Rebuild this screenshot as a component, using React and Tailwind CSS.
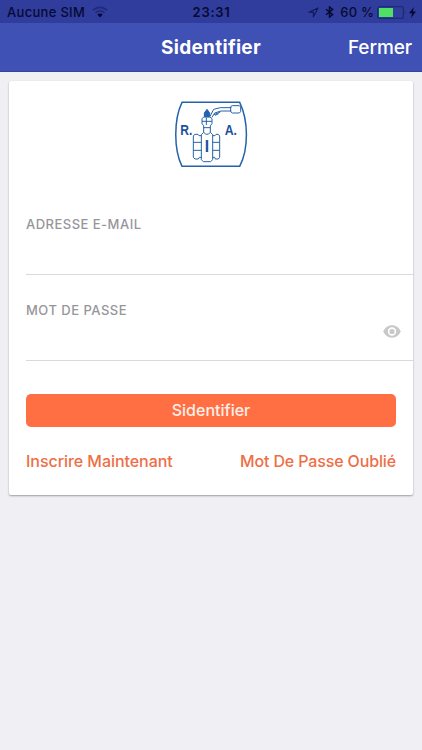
import React from "react";

function StatusBar() {
  return (
    <div className="flex h-[23px] items-center bg-[#303d9d] pl-[7px] pr-[6px] pt-[1px] text-[13px] leading-[22px] font-medium text-[#050a32]">
      <div className="flex flex-1 items-center">
        <span className="tracking-[0.3px]">Aucune SIM</span>
        <svg className="ml-[7px]" width="16" height="12" viewBox="0 0 16 12" fill="none">
          <path d="M1 4.200C5 .4 11 .4 15 4.200M3.500 6.700C6 4.300 10 4.300 12.500 6.700" stroke="#202b7c" strokeWidth="1.700" />
          <path d="M5.300 8.600C6.900 7.200 9.100 7.200 10.700 8.600L8 11.500Z" fill="#050a32" />
        </svg>
      </div>
      <span className="font-semibold tracking-[0.7px]">23:31</span>
      <div className="flex flex-1 items-center justify-end">
        <svg width="11" height="11" viewBox="0 0 11 11" fill="none" stroke="#111a58" strokeWidth="1.200" strokeLinejoin="round">
          <path d="M10 1 .9 5.200H5.400V9.800Z" />
        </svg>
        <svg className="ml-[6px]" width="9" height="12" viewBox="0 0 9 12" fill="none" stroke="#050a32" strokeWidth="1.400">
          <path d="M1 3.200 7.700 8.600 4.500 11.100V.9L7.700 3.400 1 8.800" />
        </svg>
        <span className="ml-[6px] tracking-[0.2px]">60 %</span>
        <svg className="ml-[3px]" width="29" height="13" viewBox="0 0 29 13">
          <rect x=".6" y=".6" width="25.800" height="11.800" rx="2" fill="none" stroke="#202b75" strokeWidth="1.200" />
          <rect x="2" y="2" width="14" height="9" fill="#4fe066" />
          <path d="M27.500 4.500Q29 6.500 27.500 8.500Z" fill="#202b75" />
        </svg>
        <svg className="ml-[3px]" width="7" height="11" viewBox="0 0 7 11" fill="#050a32">
          <path d="M4.800 0 0 6.200H3L2 11 7 4.600H4Z" />
        </svg>
      </div>
    </div>
  );
}

function NavBar() {
  return (
    <header className="grid h-[49px] grid-cols-[1fr_auto_1fr] items-center border-b border-[#35439c] bg-[#3f51b5] px-[10px] pt-[2px] text-white">
      <span />
      <h1 className="text-[19px] font-bold tracking-[0.3px]">Sidentifier</h1>
      <button className="justify-self-end text-[19px] font-medium tracking-[-0.1px]">Fermer</button>
    </header>
  );
}

function Logo() {
  return (
    <svg className="mt-[14px] ml-[161px] block" width="82" height="78" viewBox="0 0 246 234" fill="none" stroke="#2463a8" strokeWidth="3">
      <path d="M36 22H209C235 75 237 161 209 214H36C11 163 11 74 36 22Z" strokeWidth="4.500" />
      <g fill="#1d51a0" stroke="none" fontFamily="'Liberation Sans', Arial, sans-serif" fontWeight="700">
        <text x="31" y="121" fontSize="42" textLength="36" lengthAdjust="spacingAndGlyphs">R.</text>
        <text x="164" y="121" fontSize="42" textLength="37" lengthAdjust="spacingAndGlyphs">A.</text>
        <text x="104" y="171" fontSize="47">I</text>
      </g>
      <path d="M94 119 101 112Q111 124 121 112L128 119V194L122 200H100L94 194Z" />
      <path d="M94 122H87L84 118H74L70 123V187L75 192H85L88 187H94M128 122H135L138 118H145L149 123V187L145 192H136L134 187H128M70 142H94M70 166H94M128 142H149M128 166H149" />
      <path d="M101 112V92L96 86V71L101 66H120L126 71V86L121 92V112M96 79H126M109 68V90M101 98H121" />
      <path d="M103 65V54L111 43 119 54V65Z" fill="#2463a8" />
      <path d="M120 64 131 43 151 38H184M126 67 134 54 153 48H184M182 36Q183 32 187 32H208L212 36V50L208 54H187L182 50Z" />
      <path d="M132 59 151 51M135 61 146 56" strokeWidth="3" />
    </svg>
  );
}

function EyeIcon() {
  return (
    <svg width="18" height="13" viewBox="0 0 18 13">
      <path d="M9 .3C5 .3 1.700 2.800.3 6.500 1.700 10.200 5 12.700 9 12.700s7.300-2.500 8.700-6.200C16.300 2.800 13 .3 9 .3Z" fill="#c8c8c8" />
      <circle cx="9" cy="6.500" r="3.400" fill="#c8c8c8" stroke="#fff" strokeWidth="1.600" />
    </svg>
  );
}

export default function App() {
  return (
    <div className="min-h-[750px] w-full bg-[#efeff4] font-['Inter',sans-serif]">
      <StatusBar />
      <NavBar />
      <main className="mx-[9px] mt-[9px] h-[414px] overflow-hidden rounded-[2px] bg-white pl-[17px] shadow-[0_1px_2px_rgba(0,0,0,0.35)]">
        <div className="-ml-[17px]">
          <Logo />
        </div>
        <div className="mt-[41px] h-[61px] border-b border-[#d9d9dc]">
          <label className="block text-[13px] leading-5 font-medium tracking-[0.48px] text-[#96969a]">ADRESSE E-MAIL</label>
        </div>
        <div className="flex h-[86px] flex-col border-b border-[#d9d9dc] pt-[25px]">
          <label className="block text-[13px] leading-5 font-medium tracking-[0.48px] text-[#96969a]">MOT DE PASSE</label>
          <div className="mt-[5px] flex justify-end pr-[12px]">
            <EyeIcon />
          </div>
        </div>
        <div className="pr-[17px]">
          <button className="mt-[33px] block h-[33px] w-full rounded-[5px] bg-[#ff6f43] pb-[1px] text-[16px] font-medium text-[#fff0e9]">Sidentifier</button>
          <div className="mt-[22px] flex justify-between text-[16px] leading-6 font-medium text-[#ee6e45]">
            <a className="tracking-[-0.05px]">Inscrire Maintenant</a>
            <a className="tracking-[-0.14px]">Mot De Passe Oublié</a>
          </div>
        </div>
      </main>
    </div>
  );
}
